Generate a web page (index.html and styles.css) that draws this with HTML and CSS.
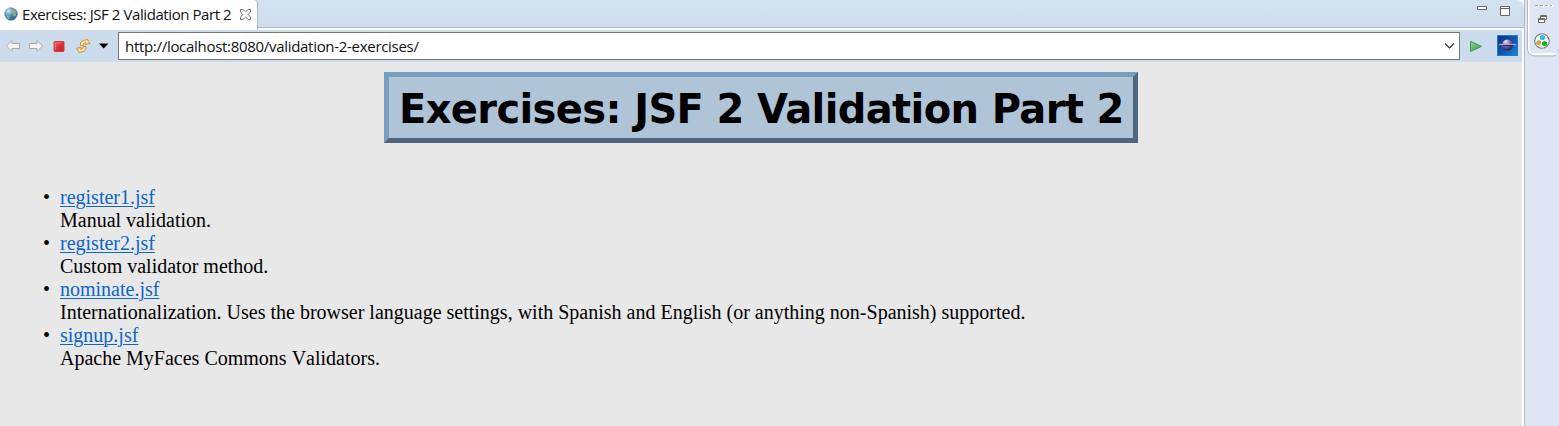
FILE: index.html
```html
<!DOCTYPE html>
<html lang="en">
<head>
<meta charset="utf-8">
<title>Exercises: JSF 2 Validation Part 2</title>
<link rel="stylesheet" href="styles.css">
</head>
<body>
<div class="workbench">
  <section class="editor">
    <header class="tabs">
      <div class="tab">
        <svg class="globe" width="14" height="14" viewBox="0 0 14 14"><defs><radialGradient id="earth" cx=".3" cy=".25" r=".8"><stop offset="0" stop-color="#d4e9f5"/><stop offset=".5" stop-color="#4e91bd"/><stop offset="1" stop-color="#245e92"/></radialGradient></defs><circle cx="7" cy="7" r="6.3" fill="url(#earth)" stroke="#6583a0" stroke-width=".6"/><path d="M8 2l3 1 1.500 3-1 3-1.500 1-1-3-2-2zM3 8l2 1 1 2.500-1.500.5-2-2z" fill="#9ab573" opacity=".8"/></svg>
        <span class="tab-title">Exercises: JSF 2 Validation Part 2</span>
        <svg class="close" width="11" height="11" viewBox="0 0 11 11"><path d="M.5.500h2.300l2.700 2.200L8.200.500h2.300v2.300L8.300 5.500l2.200 2.700v2.300H8.200L5.500 8.300 2.800 10.500H.500V8.200L2.700 5.500.500 2.800z" fill="#fff" stroke="#70747b"/></svg>
      </div>
      <div class="window-buttons">
        <svg width="33" height="12" viewBox="0 0 33 12"><path d="M.5 1.500h9v3h-9z" fill="#fff" stroke="#686560"/><path d="M23.500 1.500h9v9h-9zM23.500 3.500h9" fill="#fff" stroke="#686560"/></svg>
      </div>
    </header>
    <nav class="toolbar">
      <svg class="tools" width="118" height="32" viewBox="0 0 118 32">
        <defs><linearGradient id="stop" x2="1" y2="1"><stop stop-color="#f26c70"/><stop offset=".5" stop-color="#e32c35"/><stop offset="1" stop-color="#d51d29"/></linearGradient></defs>
        <path d="M6.500 16l5.500-5.500v3h7.500v5H12v3z" fill="#f5f5f4" stroke="#aaa9a6" stroke-linejoin="round"/>
        <path d="M42.500 16l-5.500-5.500v3h-7.500v5H37v3z" fill="#f5f5f4" stroke="#aaa9a6" stroke-linejoin="round"/>
        <rect x="54" y="11.500" width="10" height="10" rx="1" fill="url(#stop)" stroke="#c3434c"/><path d="M55.500 20v-7h7" fill="none" stroke="#ee7b80" opacity=".7"/>
        <g fill="#fbe2a4" stroke="#c48a28" stroke-width=".9" stroke-linejoin="round"><path d="M80.500 15.500c-.5-3.500 1.800-5.700 5-5.200l1.300-1.300 3.200 4.300-4.700 1.200.4-1.700c-1.700-.2-2.500.8-2.300 2.700z"/><path d="M86 16.500c.5 3.500-1.800 5.700-5 5.200l-1.300 1.300-3.200-4.800 4.700-.7-.4 1.700c1.700.2 2.500-.8 2.300-2.700z"/></g>
        <path d="M99 13.500h9.500L103.700 18.500z" fill="#000"/>
      </svg>
      <div class="address"><span class="url">http://localhost:8080/validation-2-exercises/</span><svg width="11" height="8" viewBox="0 0 11 8"><path d="M1 1.500l4.500 4.500L10 1.500" fill="none" stroke="#333" stroke-width="1.200"/></svg></div>
      <svg class="actions" width="62" height="32" viewBox="0 0 62 32">
        <defs><linearGradient id="go" y2="1"><stop stop-color="#93d095"/><stop offset="1" stop-color="#389c4e"/></linearGradient><linearGradient id="sky" x2="1" y2="1"><stop stop-color="#0c327d"/><stop offset=".6" stop-color="#155cae"/><stop offset="1" stop-color="#1688d5"/></linearGradient><radialGradient id="planet" cx=".35" cy=".2" r=".8"><stop stop-color="#efe8fa"/><stop offset=".5" stop-color="#7768aa"/><stop offset="1" stop-color="#27235c"/></radialGradient></defs>
        <path d="M10.500 11.300v10.200l11-5.100z" fill="url(#go)" stroke="#3c9851" stroke-linejoin="round"/>
        <rect x="37.500" y="5.500" width="20" height="20" fill="url(#sky)" stroke="#1c7cc8"/><circle cx="47.500" cy="15" r="5.500" fill="url(#planet)"/><path d="M39 14.500h17" stroke="#b3a9df" stroke-width="1.200"/><path d="M43 15.600h10" stroke="#232050"/>
      </svg>
    </nav>
    <main class="page">
      <h1 class="banner">Exercises: JSF 2 Validation Part 2</h1>
      <ul class="exercises">
        <li><a href="#">register1.jsf</a><br>Manual validation.</li>
        <li><a href="#">register2.jsf</a><br>Custom validator method.</li>
        <li><a href="#">nominate.jsf</a><br><span class="long">Internationalization. Uses the browser language settings, with Spanish and English (or anything non-Spanish) supported.</span></li>
        <li><a href="#">signup.jsf</a><br>Apache MyFaces Commons Validators.</li>
      </ul>
    </main>
  </section>
  <aside class="trim">
    <svg width="34" height="62" viewBox="0 0 34 62">
      <path d="M3.500 0v48q0 6 6 6H34" fill="none" stroke="#fff" stroke-width="2"/><path d="M2.500 0v48q0 8 8 8H27q7 0 7-7" fill="none" stroke="#b4b8ca"/>
      <path d="M11 6h17" stroke="#fff" stroke-width="2" stroke-dasharray="3 2"/><path d="M10 5.500h17" stroke="#aaa395" stroke-dasharray="3 2"/>
      <path d="M15.500 15.500h6v4h-6zM15.500 16.500h6M13.500 18.500h6v4h-6zM13.500 19.500h6" fill="#fff" stroke="#706961"/>
      <circle cx="17" cy="41" r="7.300" fill="#fff" stroke="#77786e" stroke-width="1.100"/><circle cx="17.500" cy="37.500" r="2.600" fill="#39b7e9"/><circle cx="13.700" cy="42.700" r="2.500" fill="#d5a33e"/><circle cx="19.600" cy="43.500" r="2.600" fill="#08bb1c"/>
    </svg>
  </aside>
</div>
</body>
</html>
```
FILE: styles.css
```css
* { box-sizing: border-box; }
body { margin: 0; overflow: hidden; }
svg { display: block; flex: none; }
.workbench { display: flex; width: 1559px; height: 426px; background: #dfe5f5; }
.editor { display: flex; flex-direction: column; width: 1525px; border-right: 1px solid #b7bac5; background: #fff; }
.tabs { display: flex; justify-content: space-between; height: 30px; border-bottom: 2px solid #fff; background: linear-gradient(#d2e2f0, #cddded); box-shadow: inset 0 -1px #adb9ce; border-top-right-radius: 7px; }
.tab { display: flex; align-items: center; width: 258px; height: 30px; padding: 0 0 2px 4px; background: #fff; border-right: 1px solid #adb9ce; border-top-right-radius: 4px; }
.tab-title { flex: none; width: 222px; padding-left: 4px; font: 15px/22px "Open Sans", sans-serif; letter-spacing: -.42px; white-space: nowrap; color: #111; }
.window-buttons { padding: 5px 14px 0 0; }
.toolbar { display: flex; width: 1522px; height: 32px; background: #cddcec; }
.address { display: flex; align-items: center; justify-content: space-between; width: 1342px; height: 28px; margin-top: 2px; padding: 0 4px 1px 6px; border: 1px solid #777; background: #fff; }
.url { font: 15px/22px "Open Sans", sans-serif; letter-spacing: -.3px; color: #111; }
.page { flex: 1; width: 1522px; padding-top: 10px; background: #e8e8e8; color: #000; }
.banner { width: 754px; height: 71px; margin: 0 0 0 384px; padding: 0 0 0 10px; border: 5px solid; border-color: #779dbf #50667f #50667f #779dbf; background: #b0c4d8; font: bold 40px/65px "DejaVu Sans", sans-serif; letter-spacing: -.63px; white-space: nowrap; }
.exercises { margin: 43px 0 0; padding: 0 0 0 60px; font: 20px/23px "Liberation Serif", serif; font-kerning: none; list-style-type: "•\00a0\00a0"; }
.exercises a { color: #0a66cc; text-decoration-thickness: 1px; text-underline-offset: 2px; }
.long { white-space: nowrap; }
.trim { width: 34px; }
```
